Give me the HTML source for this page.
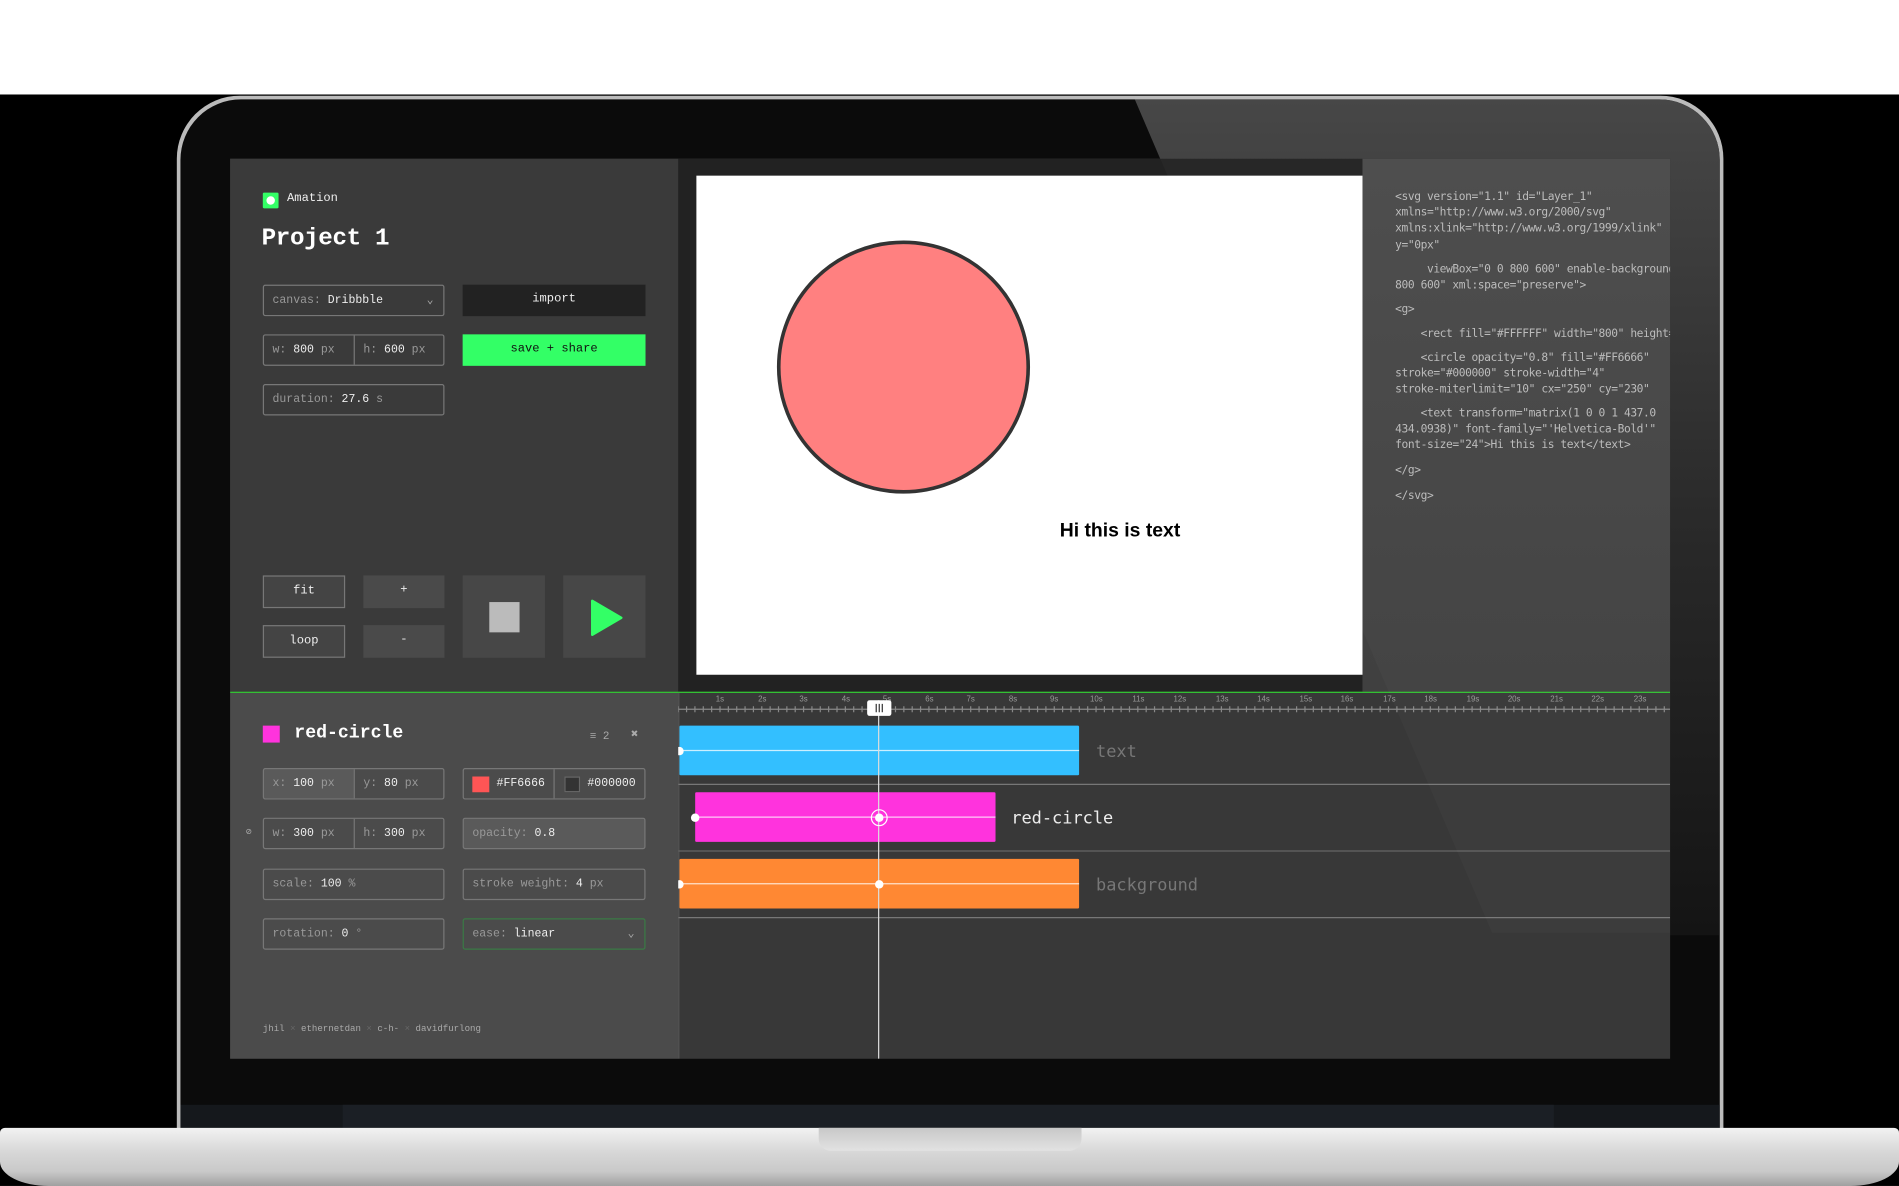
<!DOCTYPE html>
<html><head><meta charset="utf-8"><style>
*{margin:0;padding:0;box-sizing:border-box}
html,body{width:1899px;height:1186px;overflow:hidden;background:#fff}
#s{position:absolute;left:0;top:0;width:1568px;height:979px;transform:scale(1.2111,1.2114);transform-origin:0 0;font-family:"Liberation Mono",monospace;}
.a{position:absolute}
.f{position:absolute;border:1px solid #777;border-radius:2px;color:#999;font-size:9.5px;line-height:24px;padding-left:7px;white-space:nowrap}
.f b{color:#eee;font-weight:normal}
.btn{position:absolute;text-align:center;font-size:10px;color:#eee;line-height:26px}
.code{position:absolute;left:1152px;color:#bbb;font-size:9.3px;line-height:13.2px;white-space:pre;font-family:"DejaVu Sans Mono","Liberation Mono",monospace;letter-spacing:-0.35px}
</style></head><body><div id="s">
<div class="a" style="left:0;top:78px;width:1568px;height:901px;background:#000"></div>
<!-- bezel -->
<div class="a" style="left:146px;top:79px;width:1277px;height:880px;border-radius:52px 52px 0 0;background:#bbb"></div>
<div class="a" style="left:149px;top:82px;width:1271px;height:877px;border-radius:50px 50px 0 0;background:#0b0b0b;overflow:hidden">
<svg class="a" style="left:0;top:0" width="1271" height="877"><defs><linearGradient id="g" x1="0" y1="0" x2="0" y2="1"><stop offset="0" stop-color="#474747"/><stop offset="0.5" stop-color="#2a2a2a"/><stop offset="1" stop-color="#141414"/></linearGradient></defs><polygon points="788,0 1271,0 1271,690 1083,690" fill="url(#g)"/></svg>
<div class="a" style="left:0;top:830px;width:1271px;height:20px;background:#15181c"></div>
</div>
<div class="a" style="left:283px;top:912px;width:1000px;height:20px;background:#1b1f25"></div>
<!-- screen -->
<div class="a" style="left:190px;top:131px;width:1189px;height:743px;background:#383838;overflow:hidden">
 <div class="a" style="left:0;top:0;width:370px;height:440px;background:#3a3a3a"></div>
 <div class="a" style="left:370px;top:0;width:565px;height:440px;background:#222"></div>
 <div class="a" style="left:935px;top:0;width:254px;height:440px;background:linear-gradient(#4a4a4a,#404040)"></div>
 <div class="a" style="left:385px;top:14px;width:550px;height:412px;background:#fff"></div>
 <div class="a" style="left:0;top:441px;width:370px;height:302px;background:#4b4b4b"></div>
 <div class="a" style="left:0;top:440px;width:1189px;height:1px;background:#3c3"></div>
 <div class="a" style="left:370px;top:441px;width:1px;height:302px;background:#555"></div>
</div>
<!-- canvas content -->
<svg class="a" style="left:575px;top:145px" width="550" height="412"><circle cx="171" cy="158" r="103" fill="#ff8080" stroke="#333" stroke-width="3"/><text x="300" y="298" font-family="Liberation Sans,sans-serif" font-weight="bold" font-size="16" fill="#000">Hi this is text</text></svg>
<!-- left panel -->
<div class="a" style="left:217px;top:159px;width:13px;height:13px;background:#33ff66;border-radius:1px"></div>
<div class="a" style="left:220px;top:162px;width:7px;height:7px;background:#fff;border-radius:50%"></div>
<div class="a" style="left:237px;top:159px;font-size:10px;color:#eee">Amation</div>
<div class="a" style="left:216px;top:186px;font-size:20px;font-weight:bold;color:#fff;letter-spacing:-0.3px">Project 1</div>
<div class="f" style="left:217px;top:235px;width:150px;height:26px">canvas: <b>Dribbble</b><span style="position:absolute;right:8px;color:#aaa">&#8964;</span></div>
<div class="btn" style="left:382px;top:235px;width:151px;height:26px;background:#222">import</div>
<div class="f" style="left:217px;top:276px;width:150px;height:26px">w: <b>800</b> px<span style="position:absolute;left:74px;top:0;height:24px;border-left:1px solid #777;padding-left:7px">h: <b>600</b> px</span></div>
<div class="btn" style="left:382px;top:276px;width:151px;height:26px;background:#33ff66;color:#111">save + share</div>
<div class="f" style="left:217px;top:317px;width:150px;height:26px">duration: <b>27.6</b> s</div>
<div class="btn" style="left:217px;top:475px;width:68px;height:27px;border:1px solid #777;background:#444">fit</div>
<div class="btn" style="left:300px;top:475px;width:67px;height:27px;background:#4a4a4a">+</div>
<div class="btn" style="left:217px;top:516px;width:68px;height:27px;border:1px solid #777;background:#444">loop</div>
<div class="btn" style="left:300px;top:516px;width:67px;height:27px;background:#4a4a4a">-</div>
<div class="a" style="left:382px;top:475px;width:68px;height:68px;background:#474747"></div>
<div class="a" style="left:404px;top:497px;width:25px;height:25px;background:#bbb"></div>
<div class="a" style="left:465px;top:475px;width:68px;height:68px;background:#474747"></div>
<svg class="a" style="left:487px;top:494px" width="28" height="32"><path d="M2 2 L26 16 L2 30 Z" fill="#33ff66" stroke="#33ff66" stroke-linejoin="round" stroke-width="2"/></svg>
<!-- bottom panel -->
<div class="a" style="left:217px;top:599px;width:14px;height:14px;background:#ff33dd"></div>
<div class="a" style="left:243px;top:597px;font-size:15px;font-weight:bold;color:#fff">red-circle</div>
<div class="a" style="left:487px;top:603px;font-size:9px;color:#aaa">&#8801; 2</div>
<div class="a" style="left:521px;top:601px;font-size:10px;color:#aaa">&#10006;</div>
<div class="f" style="left:217px;top:634px;width:150px;height:26px;background:linear-gradient(90deg,#5a5a5a 74px,transparent 74px)">x: <b>100</b> px<span style="position:absolute;left:74px;top:0;height:24px;border-left:1px solid #777;padding-left:7px">y: <b>80</b> px</span></div>
<div class="f" style="left:382px;top:634px;width:151px;height:26px;padding-left:0"><span style="position:absolute;left:7px;top:6px;width:14px;height:13px;background:#f55"></span><span style="position:absolute;left:27px;color:#eee">#FF6666</span><span style="position:absolute;left:74px;top:0;height:24px;border-left:1px solid #777"></span><span style="position:absolute;left:83px;top:6px;width:13px;height:13px;border:1px solid #666;background:#333"></span><span style="position:absolute;left:102px;color:#eee">#000000</span></div>
<div class="a" style="left:203px;top:682px;font-size:8px;color:#aaa">&#8856;</div>
<div class="f" style="left:217px;top:675px;width:150px;height:26px">w: <b>300</b> px<span style="position:absolute;left:74px;top:0;height:24px;border-left:1px solid #777;padding-left:7px">h: <b>300</b> px</span></div>
<div class="f" style="left:382px;top:675px;width:151px;height:26px;background:#5a5a5a">opacity: <b>0.8</b></div>
<div class="f" style="left:217px;top:717px;width:150px;height:26px">scale: <b>100</b> %</div>
<div class="f" style="left:382px;top:717px;width:151px;height:26px">stroke weight: <b>4</b> px</div>
<div class="f" style="left:217px;top:758px;width:150px;height:26px">rotation: <b>0</b> °</div>
<div class="f" style="left:382px;top:758px;width:151px;height:26px;border-color:#3a7a45">ease: <b>linear</b><span style="position:absolute;right:8px;color:#aaa">&#8964;</span></div>
<div class="a" style="left:217px;top:846px;font-size:7.5px;color:#aaa">jhil <span style="color:#666">×</span> ethernetdan <span style="color:#666">×</span> c-h- <span style="color:#666">×</span> davidfurlong</div>
<!-- code -->
<div class="a" style="left:1125px;top:131px;width:254px;height:440px;overflow:hidden">
<div class="code" style="left:27px;top:25px">&lt;svg version="1.1" id="Layer_1"
xmlns="http://www.w3.org/2000/svg"
xmlns:xlink="http://www.w3.org/1999/xlink"
y="0px"</div>
<div class="code" style="left:27px;top:85px">     viewBox="0 0 800 600" enable-background="new 0 0
800 600" xml:space="preserve"&gt;</div>
<div class="code" style="left:27px;top:118px">&lt;g&gt;</div>
<div class="code" style="left:27px;top:138px">    &lt;rect fill="#FFFFFF" width="800" height="600"/&gt;</div>
<div class="code" style="left:27px;top:158px">    &lt;circle opacity="0.8" fill="#FF6666"
stroke="#000000" stroke-width="4"
stroke-miterlimit="10" cx="250" cy="230"</div>
<div class="code" style="left:27px;top:204px">    &lt;text transform="matrix(1 0 0 1 437.0
434.0938)" font-family="'Helvetica-Bold'"
font-size="24"&gt;Hi this is text&lt;/text&gt;</div>
<div class="code" style="left:27px;top:251px">&lt;/g&gt;</div>
<div class="code" style="left:27px;top:272px">&lt;/svg&gt;</div>
</div>
<!-- timeline -->
<svg class="a" style="left:560px;top:572px" width="819" height="302">
<g fill="#999" font-size="6.5" font-family="Liberation Sans,sans-serif">
<text x="31" y="7">1s</text><text x="66" y="7">2s</text><text x="100" y="7">3s</text><text x="135" y="7">4s</text><text x="169" y="7">5s</text><text x="204" y="7">6s</text><text x="238" y="7">7s</text><text x="273" y="7">8s</text><text x="307" y="7">9s</text><text x="340" y="7">10s</text><text x="375" y="7">11s</text><text x="409" y="7">12s</text><text x="444" y="7">13s</text><text x="478" y="7">14s</text><text x="513" y="7">15s</text><text x="547" y="7">16s</text><text x="582" y="7">17s</text><text x="616" y="7">18s</text><text x="651" y="7">19s</text><text x="685" y="7">20s</text><text x="720" y="7">21s</text><text x="754" y="7">22s</text><text x="789" y="7">23s</text></g>
<line x1="0" y1="13.5" x2="819" y2="13.5" stroke="#888"/>
<g stroke="#888"><path d="M0 11v5M6.9 11v5M13.8 11v5M20.7 11v5M27.6 11v5M34.5 11v5M41.4 11v5M48.3 11v5M55.2 11v5M62.1 11v5M69 11v5M75.9 11v5M82.8 11v5M89.7 11v5M96.6 11v5M103.5 11v5M110.4 11v5M117.3 11v5M124.2 11v5M131.1 11v5M138 11v5M144.9 11v5M151.8 11v5M158.7 11v5M165.6 11v5M172.5 11v5M179.4 11v5M186.3 11v5M193.2 11v5M200.1 11v5M207 11v5M213.9 11v5M220.8 11v5M227.7 11v5M234.6 11v5M241.5 11v5M248.4 11v5M255.3 11v5M262.2 11v5M269.1 11v5M276 11v5M282.9 11v5M289.8 11v5M296.7 11v5M303.6 11v5M310.5 11v5M317.4 11v5M324.3 11v5M331.2 11v5M338.1 11v5M345 11v5M351.9 11v5M358.8 11v5M365.7 11v5M372.6 11v5M379.5 11v5M386.4 11v5M393.3 11v5M400.2 11v5M407.1 11v5M414 11v5M420.9 11v5M427.8 11v5M434.7 11v5M441.6 11v5M448.5 11v5M455.4 11v5M462.3 11v5M469.2 11v5M476.1 11v5M483 11v5M489.9 11v5M496.8 11v5M503.7 11v5M510.6 11v5M517.5 11v5M524.4 11v5M531.3 11v5M538.2 11v5M545.1 11v5M552 11v5M558.9 11v5M565.8 11v5M572.7 11v5M579.6 11v5M586.5 11v5M593.4 11v5M600.3 11v5M607.2 11v5M614.1 11v5M621 11v5M627.9 11v5M634.8 11v5M641.7 11v5M648.6 11v5M655.5 11v5M662.4 11v5M669.3 11v5M676.2 11v5M683.1 11v5M690 11v5M696.9 11v5M703.8 11v5M710.7 11v5M717.6 11v5M724.5 11v5M731.4 11v5M738.3 11v5M745.2 11v5M752.1 11v5M759 11v5M765.9 11v5M772.8 11v5M779.7 11v5M786.6 11v5M793.5 11v5M800.4 11v5M807.3 11v5M814.2 11v5"/></g>
<line x1="0" y1="75.5" x2="819" y2="75.5" stroke="#777"/>
<line x1="0" y1="130.5" x2="819" y2="130.5" stroke="#666"/>
<line x1="0" y1="185.5" x2="819" y2="185.5" stroke="#777"/>
<rect x="1" y="27" width="330" height="41" rx="1" fill="#33bfff"/>
<rect x="14" y="82" width="248" height="41" rx="1" fill="#ff33dd"/>
<rect x="1" y="137" width="330" height="41" rx="1" fill="#ff8833"/>
<g stroke="#fff" stroke-opacity="0.75"><line x1="1" y1="47.5" x2="331" y2="47.5"/><line x1="14" y1="102.5" x2="262" y2="102.5"/><line x1="1" y1="157.5" x2="331" y2="157.5"/></g>
<line x1="165.5" y1="6" x2="165.5" y2="302" stroke="#ddd"/>
<g fill="#fff"><circle cx="1" cy="48" r="3.5"/><circle cx="14" cy="103" r="3.5"/><circle cx="166" cy="103" r="3.5"/><circle cx="1" cy="158" r="3.5"/><circle cx="166" cy="158" r="3.5"/></g>
<circle cx="166" cy="103" r="6.5" fill="none" stroke="#fff"/>
<rect x="156" y="6" width="20" height="13" rx="2" fill="#fff"/>
<path d="M163.5 9v7M166 9v7M168.5 9v7" stroke="#333"/>
<g font-family="DejaVu Sans Mono,Liberation Mono,monospace" font-size="14"><text x="345" y="53" fill="#777">text</text><text x="275" y="108" fill="#eee">red-circle</text><text x="345" y="163" fill="#777">background</text></g>
</svg>
<!-- subtle glare over screen -->
<svg class="a" style="left:0;top:0" width="1568" height="979"><polygon points="958,131 1379,131 1379,770 1232,770" fill="#fff" fill-opacity="0.025"/></svg>
<!-- base -->
<div class="a" style="left:0;top:931px;width:1568px;height:48px;border-radius:4px 4px 40px 40px/4px 4px 20px 20px;background:linear-gradient(#f2f2f2,#d8d8d8 40%,#c9c9c9 75%,#a0a0a0)"></div>
<div class="a" style="left:676px;top:931px;width:217px;height:19px;border-radius:0 0 10px 10px;background:linear-gradient(#c8c8c8,#e2e2e2)"></div>
</div></body></html>
